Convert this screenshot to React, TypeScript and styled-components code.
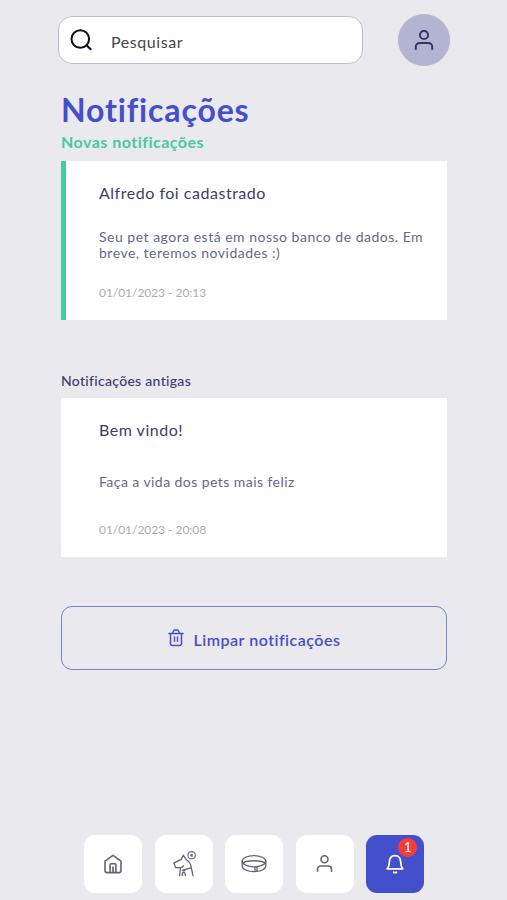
import React from "react";
import styled, { createGlobalStyle } from "styled-components";

const GlobalStyle = createGlobalStyle`
  * { box-sizing: border-box; }
  body {
    margin: 0;
    background: #e9e9ee;
    font-family: Lato, "Open Sans", sans-serif;
  }
  h1, h2, h3, p { margin: 0; }
  button { font-family: inherit; cursor: pointer; }
`;

const Screen = styled.div`
  display: flex;
  flex-direction: column;
  height: 900px;
  padding: 14px 57px 7.5px 58px;
  overflow: hidden;
`;

const Header = styled.header`
  display: flex;
  align-items: center;
  justify-content: space-between;
  height: 52px;
`;

const SearchBox = styled.label`
  display: flex;
  align-items: center;
  gap: 18px;
  width: 305px;
  height: 48px;
  padding-left: 10px;
  border: 1.5px solid #bcbdd8;
  border-radius: 14px;
  background: #fff;
`;

const SearchInput = styled.input`
  width: 200px;
  height: 24px;
  padding: 2px 0 0;
  border: 0;
  outline: 0;
  background: transparent;
  color: #454548;
  font: 400 16px Lato, sans-serif;
  letter-spacing: 0.56px;
  &::placeholder { color: #454548; opacity: 1; }
`;

const Avatar = styled.button`
  display: grid;
  place-items: center;
  width: 52px;
  height: 52px;
  padding: 0;
  border: 0;
  border-radius: 50%;
  background: #b3b4cf;
  color: #34366a;
`;

const Content = styled.main`
  display: flex;
  flex-direction: column;
  width: 386px;
  margin: 26px 0 0 3px;
`;

const Title = styled.h1`
  color: #444fcb;
  font-size: 32px;
  font-weight: 700;
  line-height: 36px;
  letter-spacing: 0.86px;
`;

const SectionTitle = styled.h2<{ $fresh?: boolean }>`
  margin: ${p => (p.$fresh ? "4px 0 9px" : "52px 0 8px")};
  color: ${p => (p.$fresh ? "#48c9a0" : "#3c3d6b")};
  font-size: ${p => (p.$fresh ? 16 : 14)}px;
  font-weight: ${p => (p.$fresh ? 700 : 500)};
  line-height: ${p => (p.$fresh ? 20 : 18)}px;
  letter-spacing: ${p => (p.$fresh ? 0.48 : 0.3)}px;
`;

const Card = styled.article<{ $fresh?: boolean }>`
  height: 159px;
  padding: 22px 0 0 ${p => (p.$fresh ? 33 : 38)}px;
  border-left: ${p => (p.$fresh ? "5px solid #45cba0" : "0")};
  background: #fff;
`;

const CardTitle = styled.h3`
  color: #3c3d6b;
  font-size: 16px;
  font-weight: 400;
  line-height: 20px;
  letter-spacing: 0.52px;
`;

const CardBody = styled.div`
  display: flex;
  align-items: center;
  height: 82px;
  padding-top: 2px;
  color: #66678c;
  font-size: 14px;
  line-height: 16px;
`;

const Message = styled.p<{ $tracking: number }>`
  letter-spacing: ${p => p.$tracking}px;
  white-space: pre-line;
`;

const Timestamp = styled.p`
  color: #acacae;
  font-size: 12px;
  line-height: 16px;
  letter-spacing: -0.05px;
`;

const ClearButton = styled.button`
  display: flex;
  align-items: center;
  justify-content: center;
  gap: 10px;
  height: 64px;
  margin-top: 49px;
  padding: 3px 0 0;
  border: 1.5px solid #7b81d3;
  border-radius: 11px;
  background: transparent;
  color: #444fcb;
  font-size: 16px;
  font-weight: 600;
  letter-spacing: 0.5px;
  svg { margin-top: -4px; }
`;

const NavBar = styled.nav`
  display: flex;
  gap: 12.6px;
  margin: auto 0 0 26px;
`;

const NavItem = styled.button<{ $active?: boolean }>`
  position: relative;
  display: grid;
  place-items: center;
  width: 58px;
  height: 58px;
  padding: 0;
  border: 0;
  border-radius: 11px;
  background: ${p => (p.$active ? "#444fcb" : "#fff")};
  color: ${p => (p.$active ? "#fff" : "#626379")};
`;

const Badge = styled.span`
  position: absolute;
  top: 3px;
  right: 7px;
  width: 19px;
  height: 19px;
  border-radius: 50%;
  background: #f83d38;
  color: #fff;
  font-size: 13px;
  line-height: 19px;
  text-align: center;
`;

const Icon = styled.svg`
  display: block;
  fill: none;
  stroke: currentColor;
  stroke-linecap: round;
  stroke-linejoin: round;
`;

const SearchIcon = () => (
  <Icon width="24" height="24" viewBox="0 0 24 24" strokeWidth="2" color="#111">
    <circle cx="11.3" cy="11" r="8.8" />
    <path d="m17.6 17.3 4 4" />
  </Icon>
);

const PersonIcon = ({ size = 20, weight = 2 }) => (
  <Icon width={size} height={size} viewBox="0 0 20 20" strokeWidth={weight}>
    <circle cx="10" cy="5" r="4.1" />
    <path d="M1.8 19v-2.2a3.8 3.8 0 0 1 3.8-3.8h8.8a3.8 3.8 0 0 1 3.8 3.8V19" />
  </Icon>
);

const TrashIcon = () => (
  <Icon width="16" height="18" viewBox="0 0 16 18" strokeWidth="1.5">
    <path d="M1 4.5h14M2.5 4.5v10a2 2 0 0 0 2 2h7a2 2 0 0 0 2-2v-10M4.5 4.2l1-2.2a1.5 1.5 0 0 1 1.4-.9h2.2a1.5 1.5 0 0 1 1.4.9l1 2.2M6.5 8v4.3M9.5 8v4.3" />
  </Icon>
);

const HomeIcon = () => (
  <Icon width="18" height="20" viewBox="0 0 18 20" strokeWidth="1.6">
    <path d="M1 7.2 9 1.3l8 5.9v9.4a2 2 0 0 1-2 2H3a2 2 0 0 1-2-2zM6.1 18.3v-7.5q0-1 1-1h3.8q1 0 1 1v7.5M9 13v5.3" />
  </Icon>
);

const DogIcon = () => (
  <Icon width="24" height="26" viewBox="0 0 24 26" strokeWidth="1.3">
    <path d="M11.3 4.2 9.2 8.4 1.7 12.2l1.4 2.6.3 1.7 5.2.1q2-.1 3-2M11.3 4.2l2.9 4.4q3.4 1.8 4.4 5l2.4 11.1M8.4 16.8l-.8 7.9M11.5 18.8l7.6-2M10.2 19.3l2.8.2M10.2 24.5q0-3.4 1.4-3.4t1.8 3.4" />
    <circle cx="19.6" cy="4.3" r="3.7" strokeWidth="1.1" />
    <circle cx="19.6" cy="4.3" r=".7" />
  </Icon>
);

const CollarIcon = () => (
  <Icon width="26" height="20" viewBox="0 0 26 20" strokeWidth="1.3">
    <ellipse cx="13" cy="7.2" rx="11.8" ry="5.6" />
    <path d="M1.6 9.6C4 5.8 22 5.8 24.4 9.6M1.2 7.2v4.7c0 3.1 5.3 5.8 11.8 5.8s11.8-2.7 11.8-5.8V7.2M14 13v4.4M16 12.8v4.4" />
  </Icon>
);

const BellIcon = () => (
  <Icon width="18" height="20" viewBox="0 0 18 20" strokeWidth="1.7">
    <path d="M1.2 14.8h15.6c-1.7-1.7-2.1-3.6-2.1-6.5 0-4.2-2.1-6.7-5.7-6.7S3.3 4.1 3.3 8.3c0 2.9-.4 4.8-2.1 6.5zM7.6 18.2q1.4.8 2.8 0" />
  </Icon>
);

export default function App() {
  return (
    <>
      <GlobalStyle />
      <Screen>
        <Header>
          <SearchBox>
            <SearchIcon />
            <SearchInput placeholder="Pesquisar" />
          </SearchBox>
          <Avatar aria-label="Perfil"><PersonIcon /></Avatar>
        </Header>
        <Content>
          <Title>Notificações</Title>
          <SectionTitle $fresh>Novas notificações</SectionTitle>
          <Card $fresh>
            <CardTitle>Alfredo foi cadastrado</CardTitle>
            <CardBody>
              <Message $tracking={0.5}>{"Seu pet agora está em nosso banco de dados. Em\nbreve, teremos novidades :)"}</Message>
            </CardBody>
            <Timestamp>01/01/2023 - 20:13</Timestamp>
          </Card>
          <SectionTitle>Notificações antigas</SectionTitle>
          <Card>
            <CardTitle>Bem vindo!</CardTitle>
            <CardBody>
              <Message $tracking={0.44}>Faça a vida dos pets mais feliz</Message>
            </CardBody>
            <Timestamp>01/01/2023 - 20:08</Timestamp>
          </Card>
          <ClearButton><TrashIcon />Limpar notificações</ClearButton>
        </Content>
        <NavBar>
          <NavItem aria-label="Início"><HomeIcon /></NavItem>
          <NavItem aria-label="Pets"><DogIcon /></NavItem>
          <NavItem aria-label="Coleiras"><CollarIcon /></NavItem>
          <NavItem aria-label="Conta"><PersonIcon size={17} weight={1.9} /></NavItem>
          <NavItem $active aria-label="Notificações"><BellIcon /><Badge>1</Badge></NavItem>
        </NavBar>
      </Screen>
    </>
  );
}
